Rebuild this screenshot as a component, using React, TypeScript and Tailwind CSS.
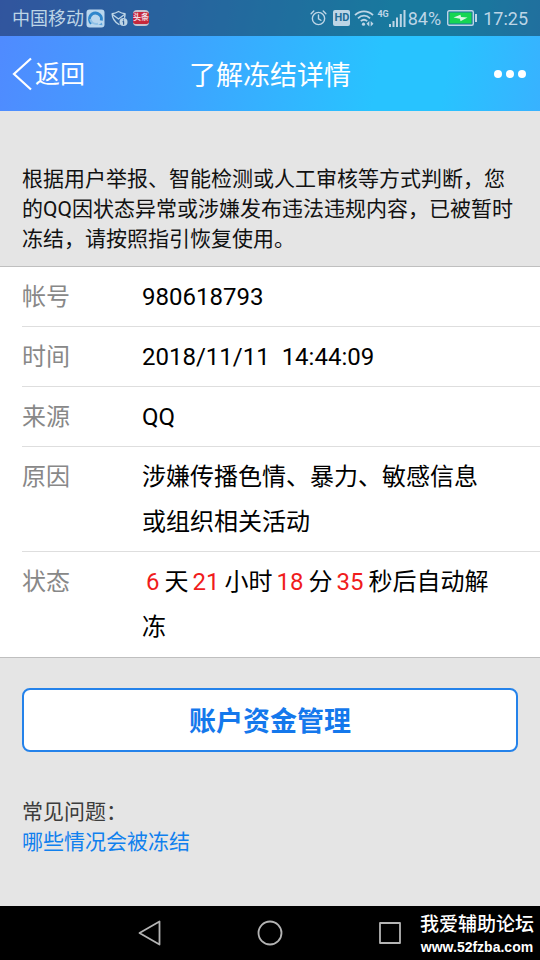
import type { ReactNode } from 'react';

function Row({ label, children }: { label: string; children: ReactNode }) {
  return (
    <div className="flex border-b border-[#dedede] pt-2 pr-12 pb-1.5 text-2xl/[45px] last:border-b-0 last:pb-[7px]">
      <dt className="w-[120px] shrink-0 text-[#888888]">{label}</dt>
      <dd className="flex-1 text-black">{children}</dd>
    </div>
  );
}

function Num({ children }: { children: ReactNode }) {
  return <span className="ml-1 mr-[5px] text-[#f01c1c]">{children}</span>;
}

function StatusBar() {
  return (
    <div className="flex h-9 items-center bg-black/38 px-3 text-lg text-[#bdd5e6]">
      <span className="pt-0.5">中国移动</span>
      <svg className="ml-0.5" width="19" height="19" viewBox="0 0 19 19">
        <rect x="0.5" y="0.5" width="18" height="18" rx="3" fill="#b9d6ee" />
        <path d="M5.500 14.500A6 6 0 1 1 15.300 11.500" fill="none" stroke="#2f86cc" strokeWidth="3" />
        <path d="M4.300 10c.5 3.500 3.700 5.500 7.700 4.800" fill="none" stroke="#8fc0e6" strokeWidth="2" />
        <path d="M12 15.800c1.500-.3 2.800-1 3.800-2.300l.7 2.800z" fill="#5fa5da" />
      </svg>
      <svg className="ml-1.5" width="17" height="17" viewBox="0 0 17 17" fill="none" stroke="currentColor" strokeWidth="1.400" strokeLinecap="round" strokeLinejoin="round">
        <path d="M8 14.500C4 12 1.200 9 1.200 3.700 4 3.300 5.500 2.600 7.500 1.500c2 1.100 3.500 1.800 6.500 2.200 0 1.300-.1 2.400-.4 3.500" />
        <path d="M1.500 4.500l6 4.500 6-4.500" />
        <circle cx="12.500" cy="12" r="4" fill="currentColor" stroke="none" />
        <path d="M12.500 9.800v.1M12 11.700h.6v2.500" stroke="#31619d" strokeWidth="1.200" />
      </svg>
      <span className="ml-[5px] flex h-4 w-4 items-center justify-center rounded-sm border-y-2 border-[#c6c3cf] bg-[#c5283c] text-[8px]/[12px] font-bold whitespace-nowrap text-[#efdce2]">
        头条
      </span>

      <svg className="ml-auto" width="17" height="18" viewBox="0 0 18 18" fill="none" stroke="currentColor" strokeWidth="1.500" strokeLinecap="round">
        <circle cx="9" cy="9.500" r="6.500" />
        <path d="M9 5.800v4l2.500 1.600M1.200 4.400L4 1.600M16.800 4.400L14 1.600" />
      </svg>
      <span className="ml-1.5 flex h-4 w-[17px] items-center justify-center rounded-xs bg-[#bdd5e6] text-[11px]/[16px] font-bold text-[#226c97]">
        HD
      </span>
      <svg className="ml-1" width="20" height="18" viewBox="0 0 20 18" fill="none" stroke="currentColor" strokeWidth="1.800">
        <path d="M1 6.200c5-5.200 13-5.200 18 0M4 9.300c3.500-3.500 8.500-3.500 12 0M6.800 12.200c2-1.800 4.400-1.800 6.400 0" />
        <circle cx="9.500" cy="15.200" r="1.600" fill="currentColor" stroke="none" />
        <path d="M12.500 14.700l2.800-2.700v5.400zM19.500 14.700L16.700 12v5.400z" fill="currentColor" stroke="none" />
      </svg>
      <span className="mb-2 ml-[3px] text-[9px]/[10px] font-bold">4G</span>
      <svg width="17" height="17" viewBox="0 0 17 17" fill="currentColor">
        <path d="M0 14h2v3H0zM3.500 11h2v6h-2zM7 7.500h2V17H7zM10.800 4h2v13h-2zM14.500 0h2v17h-2z" />
      </svg>
      <span className="ml-0.5 pt-0.5">84%</span>
      <svg className="ml-1.5" width="30" height="16" viewBox="0 0 30 16">
        <rect x="0.700" y="0.700" width="25.600" height="14.600" rx="1.500" fill="none" stroke="#bdd5e6" strokeWidth="1.400" />
        <rect x="2.500" y="2.500" width="22" height="11" fill="#16d653" />
        <rect x="28" y="4" width="2" height="8" fill="#bdd5e6" />
        <path d="M6.500 7.500L13.500 4.800l.5 2.200 6.500.500-7 3.700-.5-2.400z" fill="#d9f7e5" />
      </svg>
      <span className="ml-1.5 pt-0.5">17:25</span>
    </div>
  );
}

export default function App() {
  return (
    <div className="flex min-h-screen flex-col bg-[#e5e5e5] font-['Roboto','Noto_Sans_CJK_SC',sans-serif]">
      <header className="bg-[linear-gradient(100deg,#508aff_0%,#3fa2ff_33%,#28c3ff_70%,#28c3ff_82%,#38b2ff_100%)]">
        <StatusBar />
        <div className="grid h-[75px] grid-cols-[1fr_auto_1fr] items-center px-3 text-white">
          <button type="button" className="flex items-center gap-[3px] justify-self-start text-[25px]">
            <svg width="20" height="34" viewBox="0 0 20 34" fill="none" stroke="currentColor" strokeWidth="2.200">
              <path d="M19 1.500L2 17l17 15.500" />
            </svg>
            <span className="pt-0.5">返回</span>
          </button>
          <h1 className="pt-1.5 text-[27px]">了解冻结详情</h1>
          <button type="button" aria-label="更多" className="flex gap-1 justify-self-end pr-0.5">
            <span className="size-2 rounded-full bg-white" />
            <span className="size-2 rounded-full bg-white" />
            <span className="size-2 rounded-full bg-white" />
          </button>
        </div>
      </header>

      <main className="flex-1">
        <p className="px-[22px] pt-[53px] pb-3 text-[21px]/[30px] text-[#111111]">
          根据用户举报、智能检测或人工审核等方式判断，您的QQ因状态异常或涉嫌发布违法违规内容，已被暂时冻结，请按照指引恢复使用。
        </p>

        <dl className="border-y border-[#bfbfbf] bg-white pl-[22px]">
          <Row label="帐号">980618793</Row>
          <Row label="时间">
            <span className="whitespace-pre">2018/11/11{'  '}14:44:09</span>
          </Row>
          <Row label="来源">QQ</Row>
          <Row label="原因">涉嫌传播色情、暴力、敏感信息或组织相关活动</Row>
          <Row label="状态">
            <Num>6</Num>天<Num>21</Num>小时<Num>18</Num>分<Num>35</Num>秒后自动解冻
          </Row>
        </dl>

        <div className="px-[22px] pt-[30px]">
          <button
            type="button"
            className="h-16 w-full rounded-lg border-2 border-[#2482ea] bg-white pt-1 text-[27px] font-bold text-[#1478ec]"
          >
            账户资金管理
          </button>
          <div className="pt-[45px] text-[21px]/[30px]">
            <p className="text-[#3c3c3c]">常见问题：</p>
            <a href="#faq" className="text-[#1080ee]">
              哪些情况会被冻结
            </a>
          </div>
        </div>
      </main>

      <nav className="relative bg-black">
        <div className="mx-auto grid h-[54px] w-2/3 grid-cols-3 place-items-center text-[#b4b4b4]">
          <button type="button" aria-label="返回键">
            <svg width="28" height="28" viewBox="0 0 28 28" fill="none" stroke="currentColor" strokeWidth="1.800" strokeLinejoin="round">
              <path d="M3.500 14L23.500 2.500v23z" />
            </svg>
          </button>
          <button type="button" aria-label="主屏幕">
            <svg width="28" height="28" viewBox="0 0 28 28" fill="none" stroke="currentColor" strokeWidth="1.800">
              <circle cx="14" cy="14" r="11.500" />
            </svg>
          </button>
          <button type="button" aria-label="最近任务">
            <svg width="28" height="28" viewBox="0 0 28 28" fill="none" stroke="currentColor" strokeWidth="1.800" strokeLinejoin="round">
              <rect x="4" y="4" width="20" height="20" />
            </svg>
          </button>
        </div>
        <div className="absolute right-1.5 bottom-[5px] text-center font-medium text-white">
          <div className="text-[19px]/[28px]">我爱辅助论坛</div>
          <div className="font-['Liberation_Sans',sans-serif] text-sm/[16px] font-bold">www.52fzba.com</div>
        </div>
      </nav>
    </div>
  );
}
